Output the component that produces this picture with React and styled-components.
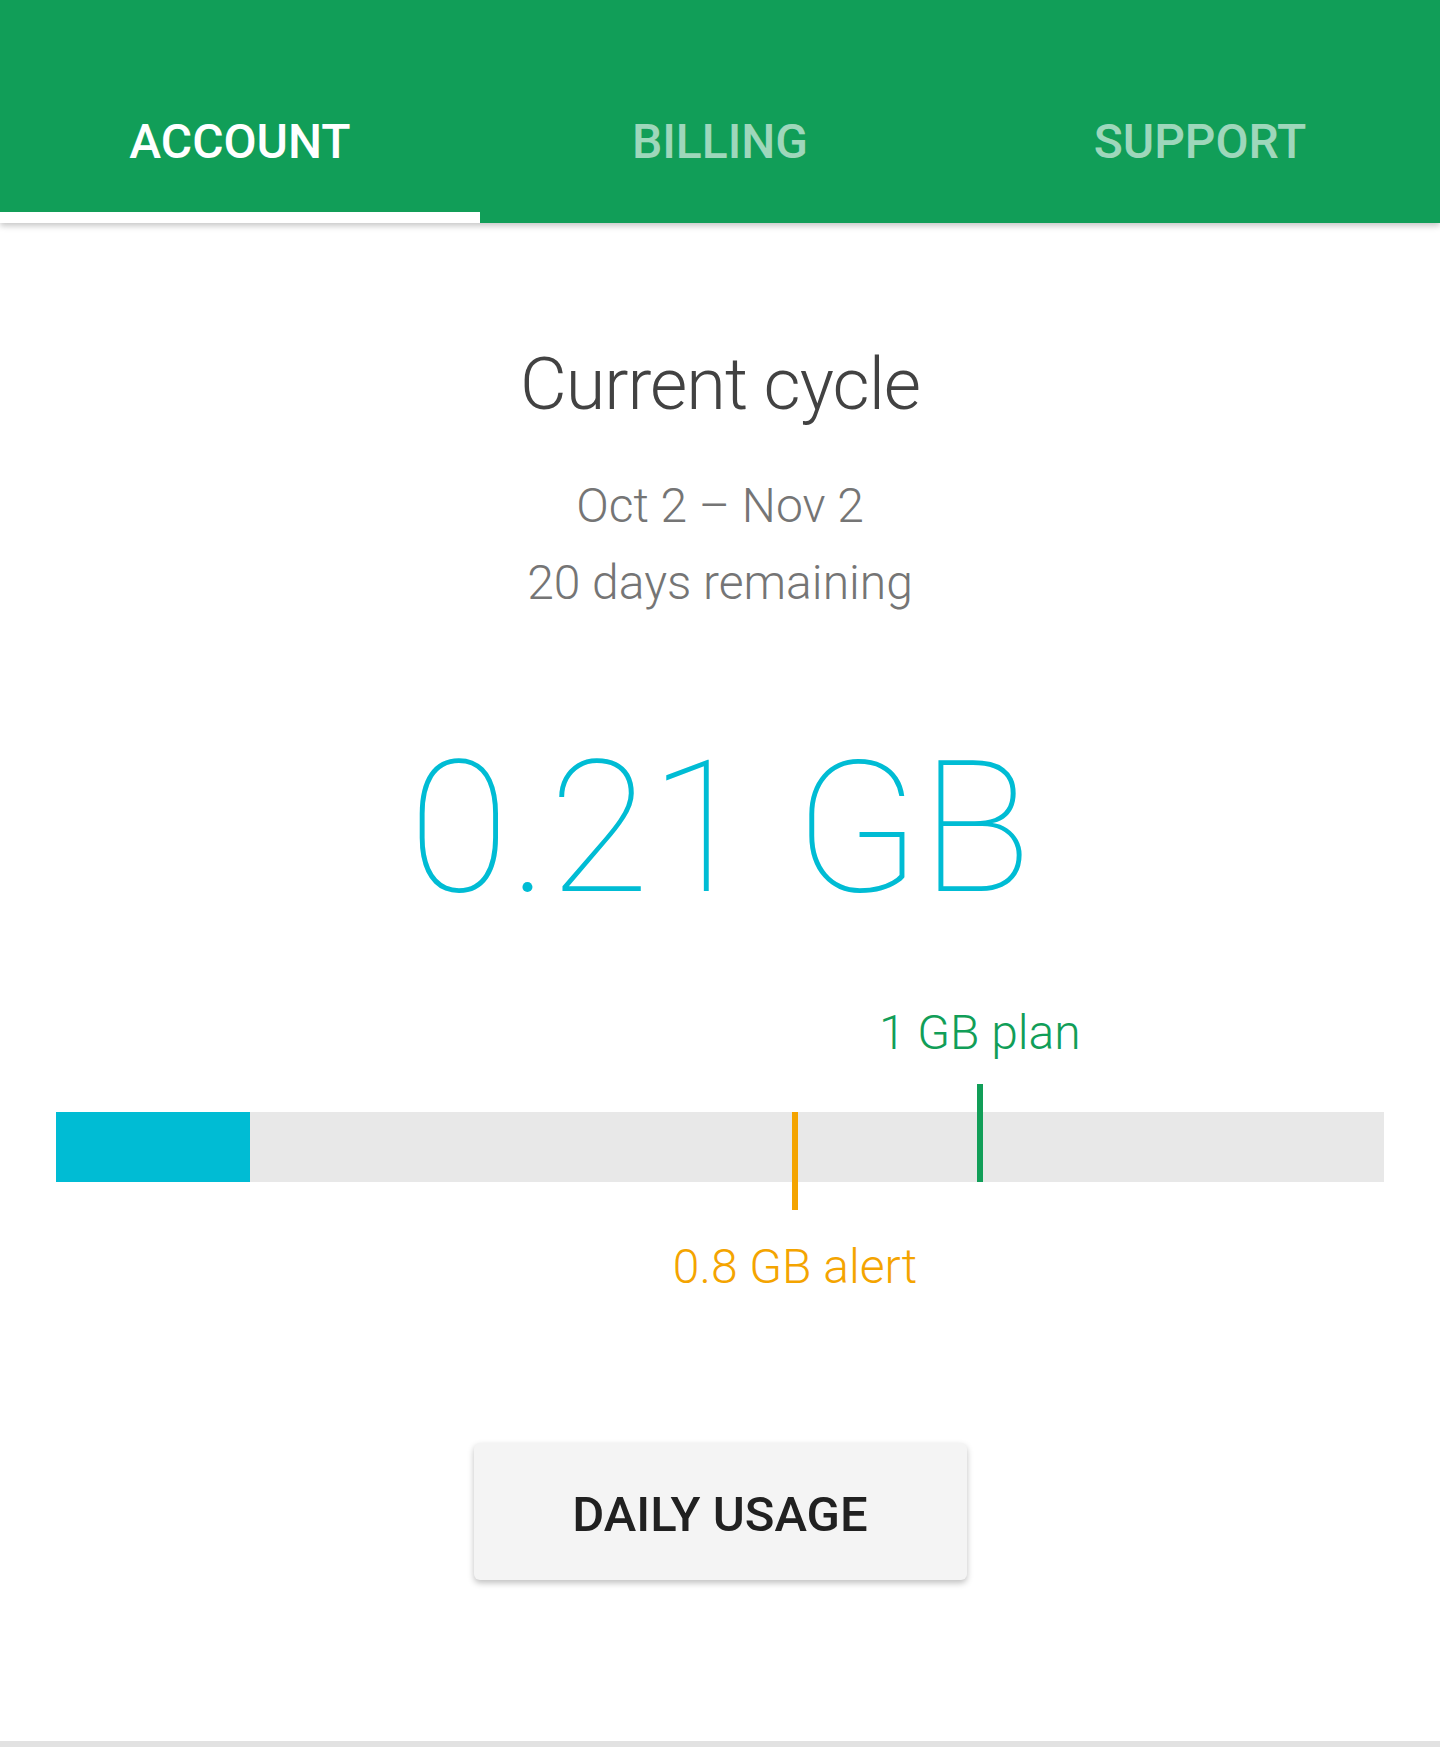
import React from 'react';
import styled, { createGlobalStyle } from 'styled-components';

const GlobalStyle = createGlobalStyle`
  html, body {
    margin: 0;
    padding: 0;
    background: #ffffff;
  }
  body {
    font-family: Roboto, "Noto Sans", "Liberation Sans", sans-serif;
  }
`

const Page = styled.div`
  display: flex;
  flex-direction: column;
  min-height: 1747px;
  width: 1440px;
  background: #fff;
`

const Header = styled.header`
  position: relative;
  z-index: 1;
  height: 223px;
  display: flex;
  align-items: flex-end;
  background: #119e58;
  box-shadow: 0 3px 6px rgba(0, 0, 0, 0.22);
`

const Tab = styled.div`
  flex: 1;
  box-sizing: border-box;
  padding-bottom: 42px;
  border-bottom: 11px solid ${p => (p.$active ? '#ffffff' : 'transparent')};
  text-align: center;
  font-size: 48px;
  line-height: 56px;
  font-weight: 500;
  text-transform: uppercase;
  color: ${p => (p.$active ? '#ffffff' : 'rgba(255, 255, 255, 0.6)')};
`

const Main = styled.main`
  flex: 1;
  display: flex;
  flex-direction: column;
  align-items: center;
  text-align: center;
`

const Title = styled.h1`
  margin: 126px 0 0;
  font-size: 72px;
  line-height: 72px;
  font-weight: 300;
  letter-spacing: -1px;
  color: #424242;
`

const Period = styled.div`
  margin-top: 46px;
  font-size: 48px;
  line-height: 77px;
  font-weight: 300;
  color: #757575;
`

const Usage = styled.div`
  margin-top: 115px;
  font-size: 184px;
  line-height: 184px;
  font-weight: 100;
  color: #00bcd4;
`

const Chart = styled.div`
  align-self: stretch;
  margin-top: 85px;
  padding: 0 56px;
  display: flex;
  flex-direction: column;
`

const LabelRow = styled.div`
  position: relative;
  height: 56px;
`

const Label = styled.span`
  position: absolute;
  top: 0;
  transform: translateX(-50%);
  white-space: nowrap;
  font-size: 48px;
  line-height: 56px;
  font-weight: 300;
  color: ${p => p.$color};
`

const Track = styled.div`
  position: relative;
  height: 70px;
  margin: 51px 0 57px;
  background: #e8e8e8;
`

const Fill = styled.div`
  height: 100%;
  background: #00bcd4;
`

const Marker = styled.div`
  position: absolute;
  width: 6px;
  height: 98px;
  margin-left: -3px;
  top: ${p => (p.$up ? '-28px' : '0')};
  background: ${p => p.$color};
`

const Button = styled.button`
  margin-top: 148px;
  width: 493px;
  height: 137px;
  padding: 6px 0 0;
  border: none;
  border-radius: 6px;
  background: #f4f4f4;
  box-shadow: 0 3px 6px rgba(0, 0, 0, 0.25);
  font-family: inherit;
  font-size: 49px;
  font-weight: 500;
  color: #212121;
  text-transform: uppercase;
  cursor: pointer;
`

const Divider = styled.div`
  height: 6px;
  background: #e2e2e2;
`

const MAX_GB = 1.4375
const used = 0.21
const alert = 0.8
const plan = 1

const pct = v => `${(v / MAX_GB) * 100}%`

function App() {
    return (
        <>
            <GlobalStyle />
            <Page>
                <Header>
                    <Tab $active>Account</Tab>
                    <Tab>Billing</Tab>
                    <Tab>Support</Tab>
                </Header>
                <Main>
                    <Title>Current cycle</Title>
                    <Period>
                        Oct 2 – Nov 2<br />
                        20 days remaining
                    </Period>
                    <Usage>{used} GB</Usage>
                    <Chart>
                        <LabelRow>
                            <Label $color="#119e58" style={{ left: pct(plan) }}>{plan} GB plan</Label>
                        </LabelRow>
                        <Track>
                            <Fill style={{ width: pct(used) }} />
                            <Marker $color="#f4a400" style={{ left: pct(alert) }} />
                            <Marker $up $color="#119e58" style={{ left: pct(plan) }} />
                        </Track>
                        <LabelRow>
                            <Label $color="#f4a400" style={{ left: pct(alert) }}>{alert} GB alert</Label>
                        </LabelRow>
                    </Chart>
                    <Button>Daily usage</Button>
                </Main>
                <Divider />
            </Page>
        </>
    );
}

export default App;
